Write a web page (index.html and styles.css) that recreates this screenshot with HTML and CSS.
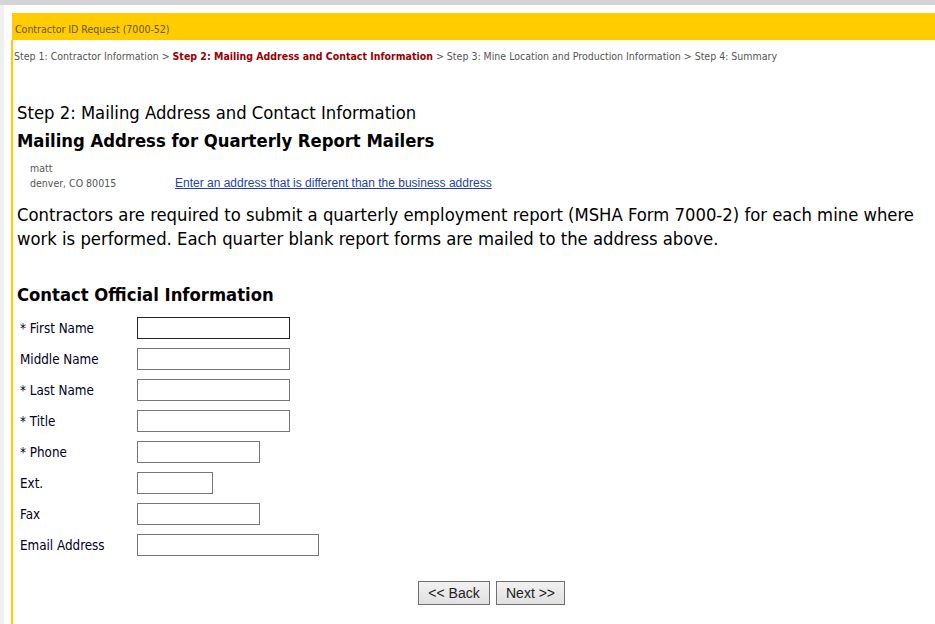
FILE: index.html
```html
<!DOCTYPE html>
<html>
<head>
<meta charset="utf-8">
<title>Contractor ID Request</title>
<link rel="stylesheet" href="styles.css">
</head>
<body>
<div class="topband"></div>
<div class="page">
  <div class="leftstrip"></div>
  <div class="frame">
    <div class="apptitle">Contractor ID Request (7000-52)</div>
    <div class="content">
      <div class="crumbs">Step 1: Contractor Information &gt; <b class="current">Step 2: Mailing Address and Contact Information</b> &gt; Step 3: Mine Location and Production Information &gt; Step 4: Summary</div>
      <div class="body">
        <h1 class="steptitle">Step 2: Mailing Address and Contact Information</h1>
        <h2 class="section">Mailing Address for Quarterly Report Mailers</h2>
        <div class="address">
          <div class="addrlines">
            <div>matt</div>
            <div>denver, CO 80015</div>
          </div>
          <a class="altlink" href="#">Enter an address that is different than the business address</a>
        </div>
        <p class="note">Contractors are required to submit a quarterly employment report (MSHA Form 7000-2) for each mine where work is performed. Each quarter blank report forms are mailed to the address above.</p>
        <h2 class="section contact">Contact Official Information</h2>
        <div class="form">
          <label class="lbl">* First Name</label><input class="inp w153 focus" type="text">
          <label class="lbl">Middle Name</label><input class="inp w153" type="text">
          <label class="lbl">* Last Name</label><input class="inp w153" type="text">
          <label class="lbl">* Title</label><input class="inp w153" type="text">
          <label class="lbl">* Phone</label><input class="inp w123" type="text">
          <label class="lbl">Ext.</label><input class="inp w76" type="text">
          <label class="lbl">Fax</label><input class="inp w123" type="text">
          <label class="lbl">Email Address</label><input class="inp w182" type="text">
        </div>
        <div class="buttons">
          <button class="btn back">&lt;&lt; Back</button>
          <button class="btn next">Next &gt;&gt;</button>
        </div>
      </div>
    </div>
  </div>
</div>
</body>
</html>
```
FILE: styles.css
```css
html, body {
  margin: 0;
  padding: 0;
  background: #ffffff;
}
body {
  font-family: "DejaVu Sans Condensed", "DejaVu Sans", sans-serif;
  color: #000;
  height: 624px;
  overflow: hidden;
}
.topband {
  height: 5px;
  background: #d4d4d4;
}
.page {
  display: flex;
  height: 619px;
}
.leftstrip {
  width: 4px;
  background: #f0f0f0;
  flex: none;
}
.frame {
  flex: 1;
  margin-left: 7px;
  padding-top: 8px;
  display: flex;
  flex-direction: column;
}
.apptitle {
  box-sizing: border-box;
  height: 27px;
  background: #ffcc00;
  margin-left: 1px;
  padding: 10px 0 0 3px;
  font-size: 10.5px;
  line-height: 13px;
  color: #66552f;
}
.content {
  flex: 1;
  border-left: 2px solid #ffcc00;
}
.crumbs {
  margin-top: 10px;
  padding-left: 1px;
  font-size: 10.5px;
  line-height: 13px;
  color: #555555;
  white-space: nowrap;
}
.crumbs .current {
  color: #990000;
}
.body {
  padding-left: 4px;
}
.steptitle {
  margin: 38px 0 0;
  font-size: 18.3px;
  font-weight: normal;
  line-height: 24px;
}
.section {
  margin: 4px 0 0;
  font-size: 18.3px;
  font-weight: bold;
  line-height: 24px;
}
.address {
  display: flex;
  align-items: flex-end;
  margin-top: 8px;
  padding-left: 13px;
  font-size: 10.5px;
  line-height: 15px;
  color: #555555;
}
.addrlines {
  width: 145px;
}
.altlink {
  font-family: "Liberation Sans", Arial, sans-serif;
  font-size: 12px;
  line-height: 15px;
  color: #1f43a0;
  text-decoration: underline;
}
.note {
  margin: 12px 0 0;
  font-size: 18.3px;
  line-height: 24px;
}
.section.contact {
  margin-top: 32px;
}
.form {
  display: grid;
  grid-template-columns: 120px auto;
  grid-auto-rows: 22px;
  row-gap: 9px;
  margin-top: 10px;
  justify-items: start;
  align-items: center;
}
.lbl {
  padding-left: 3px;
  font-size: 13.3px;
  color: #000022;
}
.inp {
  box-sizing: border-box;
  height: 22px;
  border: 1px solid #767676;
  margin: 0;
  padding: 0 3px;
  background: #fff;
}
.inp.focus {
  border-color: #222;
}
.w153 { width: 153px; }
.w123 { width: 123px; }
.w76 { width: 76px; }
.w182 { width: 182px; }
.buttons {
  display: flex;
  gap: 6px;
  margin-top: 25px;
  padding-left: 401px;
}
.btn {
  box-sizing: border-box;
  height: 24px;
  padding: 0;
  white-space: nowrap;
  border: 1px solid #707070;
  background: linear-gradient(#f2f2f2, #e0e0e0);
  font-family: "Liberation Sans", Arial, sans-serif;
  font-size: 14px;
  color: #222;
}
.btn.back { width: 72px; }
.btn.next { width: 69px; }
```
